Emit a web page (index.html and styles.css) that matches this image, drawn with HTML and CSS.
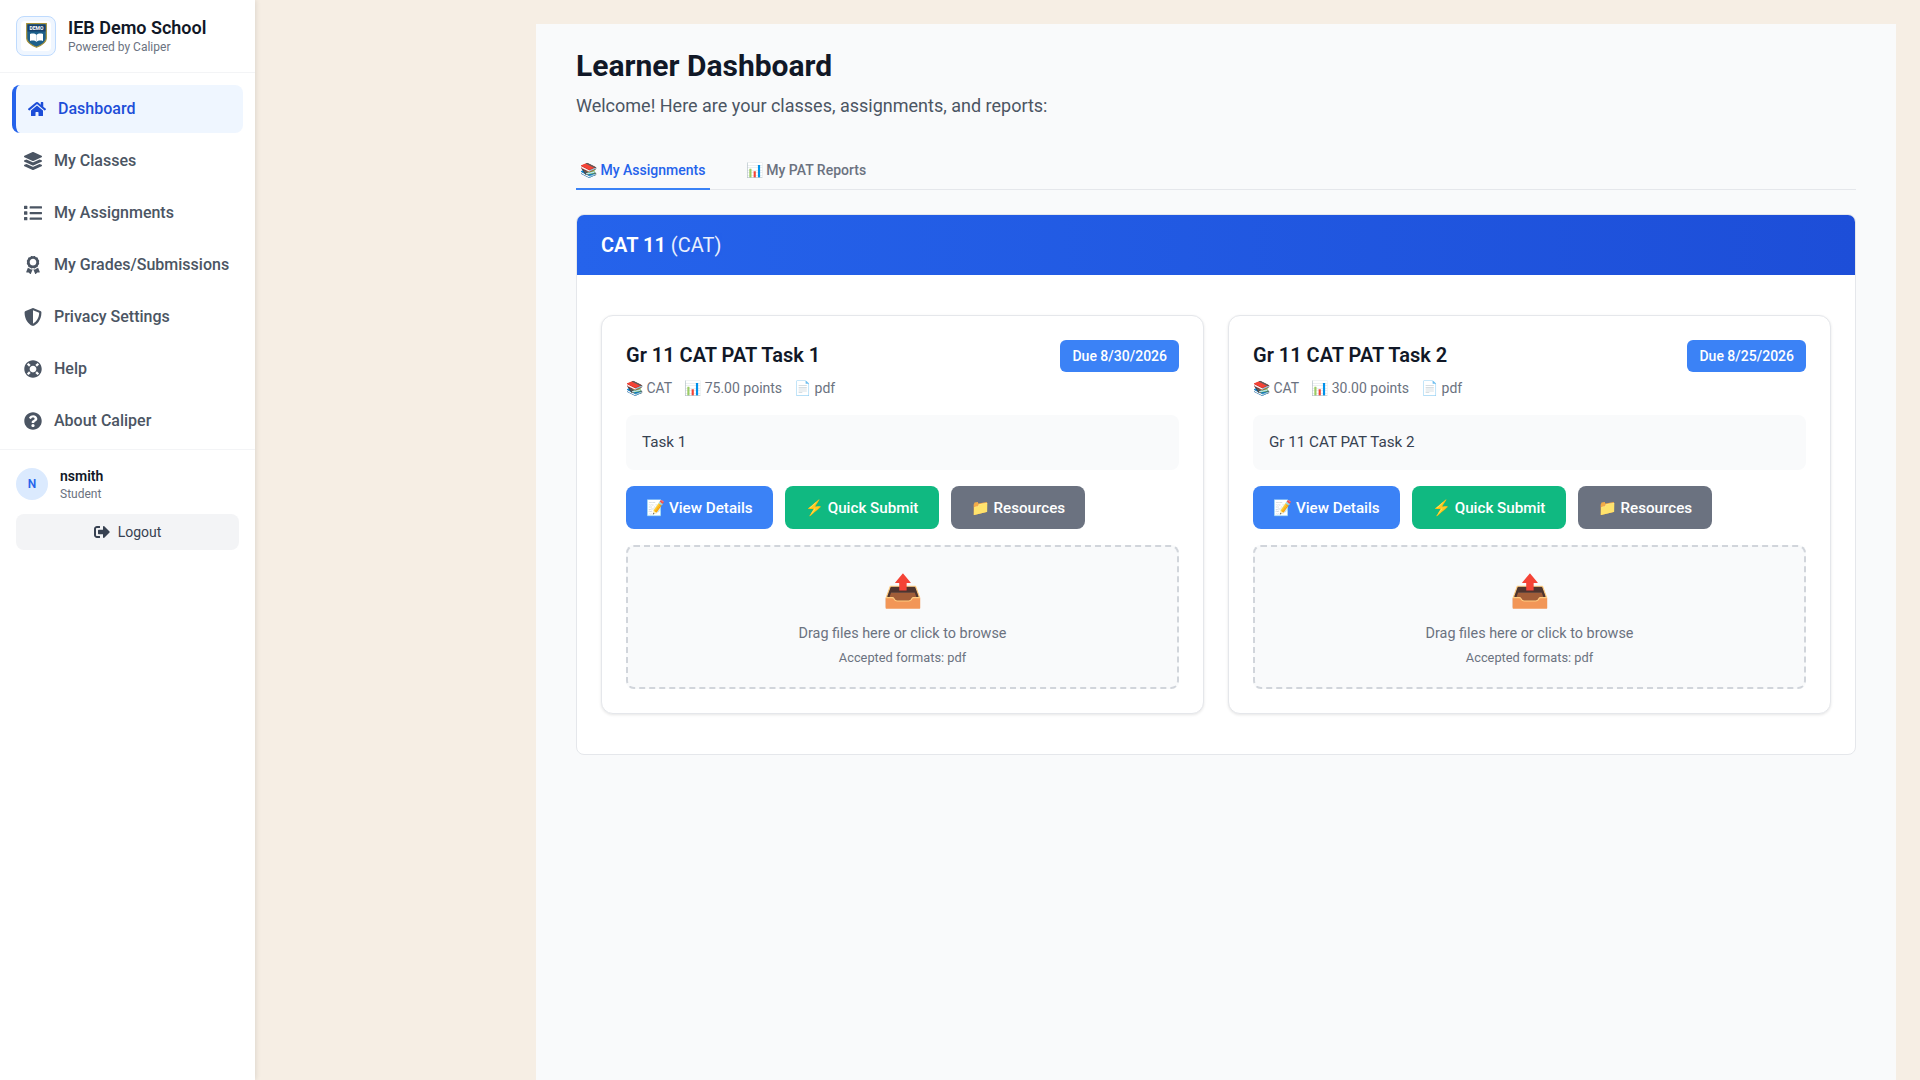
FILE: index.html
```html
<!DOCTYPE html>
<html lang="en">
<head>
  <meta charset="UTF-8">
  <meta name="viewport" content="width=device-width, initial-scale=1.0">
  <title>Learner Dashboard - IEB Demo School</title>
  <link rel="stylesheet" href="styles.css">
</head>
<body>
  <aside class="sidebar">
    <div class="brand">
      <div class="brand-logo">
        <div class="brand-logo-inner">
          <svg viewBox="0 0 21 25" width="21" height="25">
            <path d="M.7.7h19.6v14.6c0 4.6-5.4 7.2-9.8 9C6.1 22.500.7 19.900.7 15.300z" fill="#1d5f8a" stroke="#a8923a" stroke-width="1.200"/>
            <path d="M1.500 1.500h18v7h-18z" fill="#17406b"/>
            <text class="logo-word" x="10.500" y="6.500" text-anchor="middle">DEMO</text>
            <path d="M4 11c2.600-.8 5-.6 6.500 1 1.500-1.600 3.900-1.800 6.500-1v7c-2.600-.8-5-.6-6.500 1-1.500-1.600-3.900-1.800-6.500-1z" fill="#fff"/>
            <path d="M10.500 12v7" stroke="#9fb8cc" stroke-width=".6"/>
          </svg>
        </div>
      </div>
      <div>
        <div class="brand-name">IEB Demo School</div>
        <div class="brand-sub">Powered by Caliper</div>
      </div>
    </div>

    <nav class="nav">
      <a class="nav-item active" href="#">
        <svg class="nav-icon" viewBox="0 0 576 512"><path d="M280.37 148.26L96 300.11V464a16 16 0 0 0 16 16l112.06-.29a16 16 0 0 0 15.92-16V368a16 16 0 0 1 16-16h64a16 16 0 0 1 16 16v95.64a16 16 0 0 0 16 16.05L464 480a16 16 0 0 0 16-16V300L295.67 148.26a12.19 12.19 0 0 0-15.3 0zM571.6 251.47L488 182.56V44.05a12 12 0 0 0-12-12h-56a12 12 0 0 0-12 12v72.61L318.47 43a48 48 0 0 0-61 0L4.34 251.47a12 12 0 0 0-1.6 16.9l25.5 31A12 12 0 0 0 45.15 301l235.22-193.74a12.19 12.19 0 0 1 15.3 0L530.9 301a12 12 0 0 0 16.9-1.6l25.5-31a12 12 0 0 0-1.7-16.93z"/></svg>
        <span class="nav-label">Dashboard</span>
      </a>
      <a class="nav-item" href="#">
        <svg class="nav-icon" viewBox="0 0 512 512"><path d="M12.41 148.02l232.94 105.67c6.8 3.09 14.49 3.09 21.29 0l232.94-105.67c16.55-7.51 16.55-32.52 0-40.03L266.65 2.31a25.607 25.607 0 0 0-21.29 0L12.41 107.98c-16.55 7.51-16.55 32.53 0 40.04zm487.18 88.28l-58.09-26.33-161.64 73.27c-7.56 3.43-15.59 5.17-23.86 5.17s-16.29-1.74-23.86-5.17L70.51 209.97l-58.1 26.33c-16.55 7.5-16.55 32.5 0 40l232.94 105.59c6.8 3.08 14.49 3.08 21.29 0L499.59 276.3c16.55-7.5 16.55-32.5 0-40zm0 127.8l-57.87-26.23-161.86 73.37c-7.56 3.43-15.59 5.17-23.86 5.17s-16.29-1.74-23.86-5.17L70.29 337.87 12.41 364.1c-16.55 7.5-16.55 32.5 0 40l232.94 105.59c6.8 3.08 14.49 3.08 21.29 0L499.59 404.1c16.55-7.5 16.55-32.5 0-40z"/></svg>
        <span class="nav-label">My Classes</span>
      </a>
      <a class="nav-item" href="#">
        <svg class="nav-icon" viewBox="0 0 512 512"><path d="M80 368H16a16 16 0 0 0-16 16v64a16 16 0 0 0 16 16h64a16 16 0 0 0 16-16v-64a16 16 0 0 0-16-16zm0-320H16A16 16 0 0 0 0 64v64a16 16 0 0 0 16 16h64a16 16 0 0 0 16-16V64a16 16 0 0 0-16-16zm0 160H16a16 16 0 0 0-16 16v64a16 16 0 0 0 16 16h64a16 16 0 0 0 16-16v-64a16 16 0 0 0-16-16zm416 176H176a16 16 0 0 0-16 16v32a16 16 0 0 0 16 16h320a16 16 0 0 0 16-16v-32a16 16 0 0 0-16-16zm0-320H176a16 16 0 0 0-16 16v32a16 16 0 0 0 16 16h320a16 16 0 0 0 16-16V80a16 16 0 0 0-16-16zm0 160H176a16 16 0 0 0-16 16v32a16 16 0 0 0 16 16h320a16 16 0 0 0 16-16v-32a16 16 0 0 0-16-16z"/></svg>
        <span class="nav-label">My Assignments</span>
      </a>
      <a class="nav-item" href="#">
        <svg class="nav-icon" viewBox="0 0 384 512"><path d="M97.12 362.63c-8.69-8.69-4.16-6.24-25.12-11.85-9.51-2.55-17.87-7.45-25.43-13.32L1.2 448.7c-4.39 10.77 3.81 22.47 15.43 22.03l52.69-2.01L105.56 507c8 8.44 22.04 5.81 26.43-4.96l52.05-127.62c-10.84 6.04-22.87 9.58-35.31 9.58-19.5 0-37.82-7.59-51.61-21.37zM382.8 448.7l-45.37-111.24c-7.56 5.88-15.92 10.77-25.43 13.32-21.07 5.64-16.45 3.18-25.12 11.85-13.79 13.78-32.12 21.37-51.62 21.37-12.44 0-24.47-3.55-35.31-9.58L252 502.04c4.39 10.77 18.44 13.4 26.43 4.96l36.25-38.28 52.69 2.01c11.62.44 19.82-11.27 15.43-22.03zM263 340c15.28-15.55 17.03-14.21 38.79-20.14 13.89-3.79 24.75-14.84 28.47-28.98 7.48-28.4 5.54-24.97 25.95-45.75 10.17-10.35 14.14-25.44 10.42-39.58-7.47-28.38-7.48-24.42 0-52.83 3.72-14.14-.25-29.23-10.42-39.58-20.41-20.78-18.47-17.36-25.95-45.75-3.72-14.14-14.58-25.19-28.47-28.98-27.88-7.61-24.52-5.62-44.95-26.41-10.17-10.35-25-14.4-38.89-10.61-27.87 7.6-23.98 7.61-51.9 0-13.89-3.79-28.72.25-38.89 10.61-20.41 20.78-17.05 18.8-44.94 26.41-13.89 3.79-24.75 14.84-28.47 28.98-7.47 28.39-5.54 24.97-25.95 45.75-10.17 10.35-14.15 25.44-10.42 39.58 7.47 28.36 7.48 24.4 0 52.82-3.72 14.14.25 29.23 10.42 39.59 20.41 20.78 18.47 17.35 25.95 45.75 3.72 14.14 14.58 25.19 28.47 28.98C104.6 325.96 106.27 325 121 340c13.23 13.47 33.84 15.88 49.74 5.82a39.676 39.676 0 0 1 42.53 0c15.89 10.06 36.5 7.65 49.73-5.82zM97.66 175.96c0-53.03 42.24-96.02 94.34-96.02s94.34 42.99 94.34 96.02-42.24 96.02-94.34 96.02-94.34-42.99-94.34-96.02z"/></svg>
        <span class="nav-label">My Grades/Submissions</span>
      </a>
      <a class="nav-item" href="#">
        <svg class="nav-icon" viewBox="0 0 512 512"><path d="M466.5 83.7l-192-80a48.15 48.15 0 0 0-36.9 0l-192 80C27.7 91.1 16 108.6 16 128c0 198.5 114.5 335.7 221.5 380.3 11.8 4.9 25.1 4.9 36.9 0C360.1 472.6 496 349.3 496 128c0-19.4-11.7-36.9-29.5-44.3zM256.1 446.3l-.1-381 175.9 73.3c-3.3 151.4-82.1 261.1-175.8 307.7z"/></svg>
        <span class="nav-label">Privacy Settings</span>
      </a>
      <a class="nav-item" href="#">
        <svg class="nav-icon" viewBox="0 0 512 512"><path d="M256 8C119.033 8 8 119.033 8 256s111.033 248 248 248 248-111.033 248-248S392.967 8 256 8zm173.696 119.559l-63.399 63.399c-10.987-18.559-26.67-34.252-45.255-45.255l63.399-63.399a218.396 218.396 0 0 1 45.255 45.255zM256 352c-53.019 0-96-42.981-96-96s42.981-96 96-96 96 42.981 96 96-42.981 96-96 96zM127.559 82.304l63.399 63.399c-18.559 10.987-34.252 26.67-45.255 45.255l-63.399-63.399a218.372 218.372 0 0 1 45.255-45.255zM82.304 384.441l63.399-63.399c10.987 18.559 26.67 34.252 45.255 45.255l-63.399 63.399a218.396 218.396 0 0 1-45.255-45.255zm302.137 45.255l-63.399-63.399c18.559-10.987 34.252-26.67 45.255-45.255l63.399 63.399a218.403 218.403 0 0 1-45.255 45.255z"/></svg>
        <span class="nav-label">Help</span>
      </a>
      <a class="nav-item" href="#">
        <svg class="nav-icon" viewBox="0 0 512 512"><path d="M504 256c0 136.997-111.043 248-248 248S8 392.997 8 256C8 119.083 119.043 8 256 8s248 111.083 248 248zM262.655 90c-54.497 0-89.255 22.957-116.549 63.758-3.536 5.286-2.353 12.415 2.715 16.258l34.699 26.31c5.205 3.947 12.621 3.008 16.665-2.122 17.864-22.658 30.113-35.797 57.303-35.797 20.429 0 45.698 13.148 45.698 32.958 0 14.976-12.363 22.667-32.534 33.976C247.128 238.528 216 254.941 216 296v4c0 6.627 5.373 12 12 12h56c6.627 0 12-5.373 12-12v-1.333c0-28.462 83.186-29.647 83.186-106.667 0-58.002-60.165-102-116.531-102zM256 338c-25.365 0-46 20.635-46 46 0 25.364 20.635 46 46 46s46-20.636 46-46c0-25.365-20.635-46-46-46z"/></svg>
        <span class="nav-label">About Caliper</span>
      </a>
    </nav>

    <div class="user-box">
      <div class="user-row">
        <div class="avatar">N</div>
        <div>
          <div class="user-name">nsmith</div>
          <div class="user-role">Student</div>
        </div>
      </div>
      <button class="logout">
        <svg class="logout-icon" viewBox="0 0 512 512"><path d="M497 273L329 441c-15 15-41 4.5-41-17v-96H152c-13.3 0-24-10.7-24-24v-96c0-13.3 10.7-24 24-24h136V88c0-21.4 25.9-32 41-17l168 168c9.3 9.4 9.3 24.6 0 34zM192 436v-40c0-6.6-5.4-12-12-12H96c-17.7 0-32-14.3-32-32V160c0-17.7 14.3-32 32-32h84c6.6 0 12-5.4 12-12V76c0-6.6-5.4-12-12-12H96c-53 0-96 43-96 96v192c0 53 43 96 96 96h84c6.6 0 12-5.4 12-12z"/></svg>
        Logout
      </button>
    </div>
  </aside>

  <main class="main">
    <div class="content">
      <h1>Learner Dashboard</h1>
      <p class="welcome">Welcome! Here are your classes, assignments, and reports:</p>

      <div class="tabs">
        <a class="tab active" href="#">📚 My Assignments</a>
        <a class="tab" href="#">📊 My PAT Reports</a>
      </div>

      <section class="course">
        <div class="course-head"><strong>CAT 11</strong> <span class="course-code">(CAT)</span></div>
        <div class="course-body">

          <article class="task">
            <div class="task-top">
              <h3>Gr 11 CAT PAT Task 1</h3>
              <span class="due">Due 8/30/2026</span>
            </div>
            <div class="task-meta">
              <span>📚 CAT</span>
              <span>📊 75.00 points</span>
              <span>📄 pdf</span>
            </div>
            <div class="task-desc">Task 1</div>
            <div class="task-actions">
              <button class="btn btn-blue">📝 View Details</button>
              <button class="btn btn-green">⚡ Quick Submit</button>
              <button class="btn btn-gray">📁 Resources</button>
            </div>
            <div class="dropzone">
              <div class="drop-icon">📤</div>
              <p class="drop-text">Drag files here or click to browse</p>
              <p class="drop-note">Accepted formats: pdf</p>
            </div>
          </article>

          <article class="task">
            <div class="task-top">
              <h3>Gr 11 CAT PAT Task 2</h3>
              <span class="due">Due 8/25/2026</span>
            </div>
            <div class="task-meta">
              <span>📚 CAT</span>
              <span>📊 30.00 points</span>
              <span>📄 pdf</span>
            </div>
            <div class="task-desc">Gr 11 CAT PAT Task 2</div>
            <div class="task-actions">
              <button class="btn btn-blue">📝 View Details</button>
              <button class="btn btn-green">⚡ Quick Submit</button>
              <button class="btn btn-gray">📁 Resources</button>
            </div>
            <div class="dropzone">
              <div class="drop-icon">📤</div>
              <p class="drop-text">Drag files here or click to browse</p>
              <p class="drop-note">Accepted formats: pdf</p>
            </div>
          </article>

        </div>
      </section>
    </div>
  </main>
</body>
</html>
```

FILE: styles.css
```css
* {
  box-sizing: border-box;
}
html, body {
  height: 100%;
}
body {
  margin: 0;
  display: flex;
  height: 1080px;
  overflow: hidden;
  font-family: Roboto, "Noto Sans", sans-serif;
  background: #f6eee4;
  color: #111827;
}

/* sidebar */
.sidebar {
  width: 255px;
  flex-shrink: 0;
  background: #fff;
  box-shadow: 1px 0 5px rgba(0, 0, 0, 0.1);
}
.brand {
  display: flex;
  align-items: center;
  gap: 12px;
  height: 73px;
  padding: 0 16px 1px;
  border-bottom: 1px solid #f3f4f6;
}
.brand-logo {
  width: 40px;
  height: 40px;
  padding: 4px;
  background: #eff6ff;
  border: 1px solid #bfdbfe;
  border-radius: 8px;
}
.brand-logo-inner {
  height: 100%;
  display: flex;
  align-items: center;
  justify-content: center;
  background: #fff;
  border-radius: 4px;
}
.logo-word {
  font-family: Roboto, sans-serif;
  font-size: 5px;
  font-weight: 700;
  fill: #fff;
}
.brand-name {
  font-size: 18px;
  font-weight: 600;
  line-height: 24px;
}
.brand-sub {
  font-size: 12px;
  line-height: 15px;
  color: #6b7280;
}
.nav {
  display: flex;
  flex-direction: column;
  gap: 4px;
  padding: 12px 12px 4px;
  border-bottom: 1px solid #f3f4f6;
}
.nav-item {
  display: flex;
  align-items: center;
  gap: 12px;
  height: 48px;
  padding: 0 12px;
  border-radius: 8px;
  font-size: 16px;
  font-weight: 500;
  color: #4b5563;
  text-decoration: none;
}
.nav-label {
  margin-top: -2px;
}
.nav-item.active {
  background: #eff6ff;
  border-left: 4px solid #2563eb;
  color: #1d4ed8;
}
.nav-icon {
  width: 18px;
  height: 18px;
  fill: currentColor;
  flex-shrink: 0;
}
.user-box {
  padding: 16px;
}
.user-row {
  display: flex;
  align-items: center;
  gap: 12px;
  margin-bottom: 12px;
}
.avatar {
  width: 32px;
  height: 32px;
  border-radius: 50%;
  background: #dbeafe;
  color: #2563eb;
  font-size: 12px;
  font-weight: 600;
  display: flex;
  align-items: center;
  justify-content: center;
}
.user-name {
  font-size: 14px;
  font-weight: 600;
  line-height: 20px;
}
.user-role {
  font-size: 12px;
  line-height: 16px;
  color: #6b7280;
}
.logout {
  width: 100%;
  height: 36px;
  display: flex;
  align-items: center;
  justify-content: center;
  gap: 8px;
  border: 0;
  border-radius: 8px;
  background: #f3f4f6;
  color: #374151;
  font: 400 14px Roboto, sans-serif;
}
.logout-icon {
  width: 16px;
  height: 16px;
  fill: currentColor;
}

/* main area */
.main {
  flex: 1;
  padding: 24px 24px 0;
  display: flex;
  justify-content: flex-end;
}
.content {
  width: 1360px;
  background: #f9fafb;
  padding: 24px 40px;
}
h1 {
  margin: 0;
  font-size: 30px;
  font-weight: 700;
  line-height: 36px;
}
.welcome {
  margin: 8px 0 0;
  font-size: 18px;
  line-height: 28px;
  color: #4b5563;
}
.tabs {
  display: flex;
  gap: 32px;
  margin-top: 24px;
  border-bottom: 1px solid #e5e7eb;
}
.tab {
  padding: 16px 4.4px 8px 4px;
  font-size: 14px;
  font-weight: 500;
  line-height: 20px;
  color: #6b7280;
  text-decoration: none;
  border-bottom: 2px solid transparent;
  margin-bottom: -1px;
}
.tab.active {
  color: #2563eb;
  border-bottom-color: #3b82f6;
}
.course {
  margin-top: 24px;
  background: #fff;
  border: 1px solid #e5e7eb;
  border-radius: 8px;
  overflow: hidden;
}
.course-head {
  height: 60px;
  padding: 0 24px;
  line-height: 60px;
  background: linear-gradient(90deg, #2563eb, #1d4ed8);
  color: #fff;
  font-size: 20px;
}
.course-head strong {
  font-weight: 600;
}
.course-code {
  opacity: 0.9;
}
.course-body {
  display: grid;
  grid-template-columns: 1fr 1fr;
  gap: 24px;
  padding: 40px 24px;
}
.task {
  background: #fff;
  border: 1px solid #e5e7eb;
  border-radius: 12px;
  padding: 24px;
  box-shadow: 0 1px 3px rgba(0, 0, 0, 0.1);
}
.task-top {
  display: flex;
  justify-content: space-between;
  align-items: flex-start;
}
.task h3 {
  margin: 1px 0 0;
  font-size: 20px;
  font-weight: 600;
  line-height: 28px;
  color: #111827;
}
.due {
  padding: 8px 12px;
  background: #3b82f6;
  color: #fff;
  font-size: 14px;
  font-weight: 500;
  line-height: 16px;
  border-radius: 6px;
}
.task-meta {
  display: flex;
  gap: 12px;
  margin-top: 6px;
  font-size: 14px;
  line-height: 20px;
  color: #6b7280;
}
.task-desc {
  margin-top: 17px;
  padding: 16px;
  background: #f9fafb;
  border-radius: 8px;
  font-size: 15.2px;
  line-height: 23px;
  color: #374151;
}
.task-actions {
  display: flex;
  gap: 12px;
  margin-top: 16px;
}
.btn {
  height: 43px;
  padding: 0 20.15px;
  border: 0;
  border-radius: 8px;
  color: #fff;
  font: 500 15.2px Roboto, sans-serif;
}
.btn-blue {
  background: #3b82f6;
}
.btn-green {
  background: #10b981;
}
.btn-gray {
  background: #6b7280;
}
.dropzone {
  margin-top: 16px;
  height: 144px;
  padding-top: 24px;
  background: #f9fafb;
  border: 2px dashed #d1d5db;
  border-radius: 8px;
  text-align: center;
  color: #6b7280;
}
.drop-icon {
  font-size: 32px;
  line-height: 40px;
}
.drop-text {
  margin: 13px 0 0;
  font-size: 14.4px;
  line-height: 20px;
}
.drop-note {
  margin: 4px 0 0;
  font-size: 12.8px;
  line-height: 20px;
}
```
